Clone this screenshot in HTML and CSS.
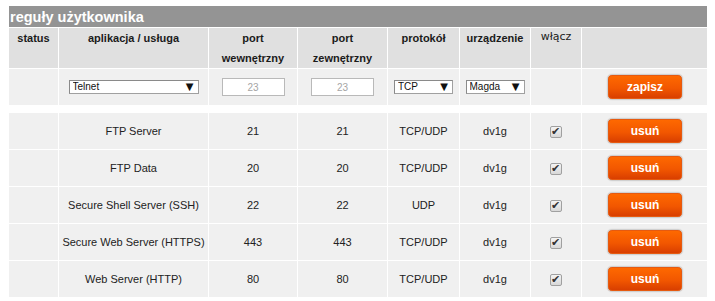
FILE: index.html
```html
<!DOCTYPE html>
<html lang="pl">
<head>
    <meta charset="UTF-8">
    <title>Reguły użytkownika</title>
    <link rel="stylesheet" href="styles.css">
</head>
<body>

<table class="rules">
    <colgroup>
        <col class="c-status">
        <col class="c-app">
        <col class="c-portw">
        <col class="c-portz">
        <col class="c-proto">
        <col class="c-dev">
        <col class="c-on">
        <col class="c-action">
    </colgroup>
    <thead>
        <tr>
            <th class="title" colspan="8">reguły użytkownika</th>
        </tr>
        <tr class="head">
            <th>status</th>
            <th>aplikacja / usługa</th>
            <th>port<br>wewnętrzny</th>
            <th>port<br>zewnętrzny</th>
            <th>protokół</th>
            <th>urządzenie</th>
            <th class="light">włącz</th>
            <th></th>
        </tr>
    </thead>
    <tbody>
        <tr class="new">
            <td></td>
            <td>
                <span class="pick pick-app">
                    <select><option>Telnet</option><option>FTP Server</option></select>
                    <span class="arrow">▼</span>
                </span>
            </td>
            <td><input type="text" class="port" value="23"></td>
            <td><input type="text" class="port" value="23"></td>
            <td>
                <span class="pick pick-small">
                    <select><option>TCP</option><option>UDP</option><option>TCP/UDP</option></select>
                    <span class="arrow">▼</span>
                </span>
            </td>
            <td>
                <span class="pick pick-small">
                    <select><option>Magda</option><option>dv1g</option></select>
                    <span class="arrow">▼</span>
                </span>
            </td>
            <td></td>
            <td><button type="button" class="btn">zapisz</button></td>
        </tr>
        <tr class="spacer"><td colspan="8"></td></tr>
        <tr>
            <td></td>
            <td>FTP Server</td>
            <td>21</td>
            <td>21</td>
            <td>TCP/UDP</td>
            <td>dv1g</td>
            <td><input type="checkbox" class="check" checked></td>
            <td><button type="button" class="btn">usuń</button></td>
        </tr>
        <tr>
            <td></td>
            <td>FTP Data</td>
            <td>20</td>
            <td>20</td>
            <td>TCP/UDP</td>
            <td>dv1g</td>
            <td><input type="checkbox" class="check" checked></td>
            <td><button type="button" class="btn">usuń</button></td>
        </tr>
        <tr>
            <td></td>
            <td>Secure Shell Server (SSH)</td>
            <td>22</td>
            <td>22</td>
            <td>UDP</td>
            <td>dv1g</td>
            <td><input type="checkbox" class="check" checked></td>
            <td><button type="button" class="btn">usuń</button></td>
        </tr>
        <tr>
            <td></td>
            <td>Secure Web Server (HTTPS)</td>
            <td>443</td>
            <td>443</td>
            <td>TCP/UDP</td>
            <td>dv1g</td>
            <td><input type="checkbox" class="check" checked></td>
            <td><button type="button" class="btn">usuń</button></td>
        </tr>
        <tr>
            <td></td>
            <td>Web Server (HTTP)</td>
            <td>80</td>
            <td>80</td>
            <td>TCP/UDP</td>
            <td>dv1g</td>
            <td><input type="checkbox" class="check" checked></td>
            <td><button type="button" class="btn">usuń</button></td>
        </tr>
    </tbody>
</table>

</body>
</html>
```

FILE: styles.css
```css
body {
    margin: 5px 8px;
    background: #fff;
    font-family: "Liberation Sans", Arial, sans-serif;
    font-size: 11px;
    color: #222;
}
.rules {
    width: 701px;
    table-layout: fixed;
    border-collapse: separate;
    border-spacing: 1px;
}
.c-status { width: 49px; }
.c-app { width: 149px; }
.c-portw { width: 88px; }
.c-portz { width: 89px; }
.c-proto { width: 71px; }
.c-dev { width: 70px; }
.c-on { width: 50px; }
.c-action { width: 126px; }

.rules th,
.rules td {
    padding: 0;
    text-align: center;
}
.title {
    height: 21px;
    background: #949494;
    color: #fff;
    font-size: 14.5px;
    font-weight: bold;
    text-align: left !important;
    padding-left: 1px !important;
    vertical-align: middle;
}
.head th {
    height: 39px;
    background: #e0e0e0;
    color: #1b1b1b;
    font-weight: bold;
    line-height: 20px;
    vertical-align: top;
}
.head th.light {
    font-weight: normal;
    font-family: "DejaVu Sans", Verdana, sans-serif;
    font-size: 11px;
    line-height: 18px;
}
.rules tbody td {
    height: 36px;
    background: #f0f0f0;
    vertical-align: middle;
}
.rules tbody tr.spacer td {
    height: 6px;
    background: #fff;
}

/* pola formularza */
.pick {
    position: relative;
    display: inline-block;
    vertical-align: middle;
}
.pick select {
    appearance: none;
    -webkit-appearance: none;
    display: block;
    height: 14px;
    margin: 0;
    padding: 0 0 0 3px;
    border: 1px solid #a0a0a0;
    border-top-color: #8a8a8a;
    border-left-color: #8a8a8a;
    border-radius: 0;
    background: #fff;
    font-family: "Liberation Sans", Arial, sans-serif;
    font-size: 10px;
    color: #111;
    line-height: 12px;
}
.pick-app select { width: 130px; }
.pick-small select { width: 59px; }
.pick .arrow {
    position: absolute;
    right: 5px;
    top: 1px;
    font-family: "DejaVu Sans", sans-serif;
    font-size: 10px;
    line-height: 12px;
    color: #111;
    pointer-events: none;
}
.port {
    display: inline-block;
    vertical-align: middle;
    box-sizing: border-box;
    width: 63px;
    height: 18px;
    margin: 0;
    padding: 0;
    border: 1px solid #b9b9b9;
    background: #fff;
    font-family: "Liberation Sans", Arial, sans-serif;
    font-size: 10px;
    color: #a5a5a5;
    text-align: center;
}

.check {
    appearance: none;
    -webkit-appearance: none;
    position: relative;
    display: inline-block;
    vertical-align: middle;
    width: 12px;
    height: 12px;
    margin: 0;
    border: 1px solid #a0a0a0;
    border-radius: 2px;
    background: linear-gradient(#f4f4f4, #d8d8d8);
    box-sizing: border-box;
}
.check:checked::after {
    content: "✔";
    position: absolute;
    left: 0;
    top: -1px;
    font-family: "DejaVu Sans", sans-serif;
    font-size: 11px;
    line-height: 12px;
    color: #333;
}

.btn {
    display: inline-block;
    vertical-align: middle;
    width: 76px;
    height: 26px;
    margin: 0;
    padding: 0;
    border: 1px solid #d0d0d0;
    border-radius: 5px;
    background: linear-gradient(#ff6a00, #f25700 55%, #d63c00);
    box-shadow: inset 0 0 0 1px #e65a10, 0 0 1px #bbb;
    font-family: "Liberation Sans", Arial, sans-serif;
    font-size: 12px;
    font-weight: bold;
    color: #fff;
    cursor: pointer;
}
.btn:hover {
    background: linear-gradient(#ff7a1a, #e14a00);
}
```
